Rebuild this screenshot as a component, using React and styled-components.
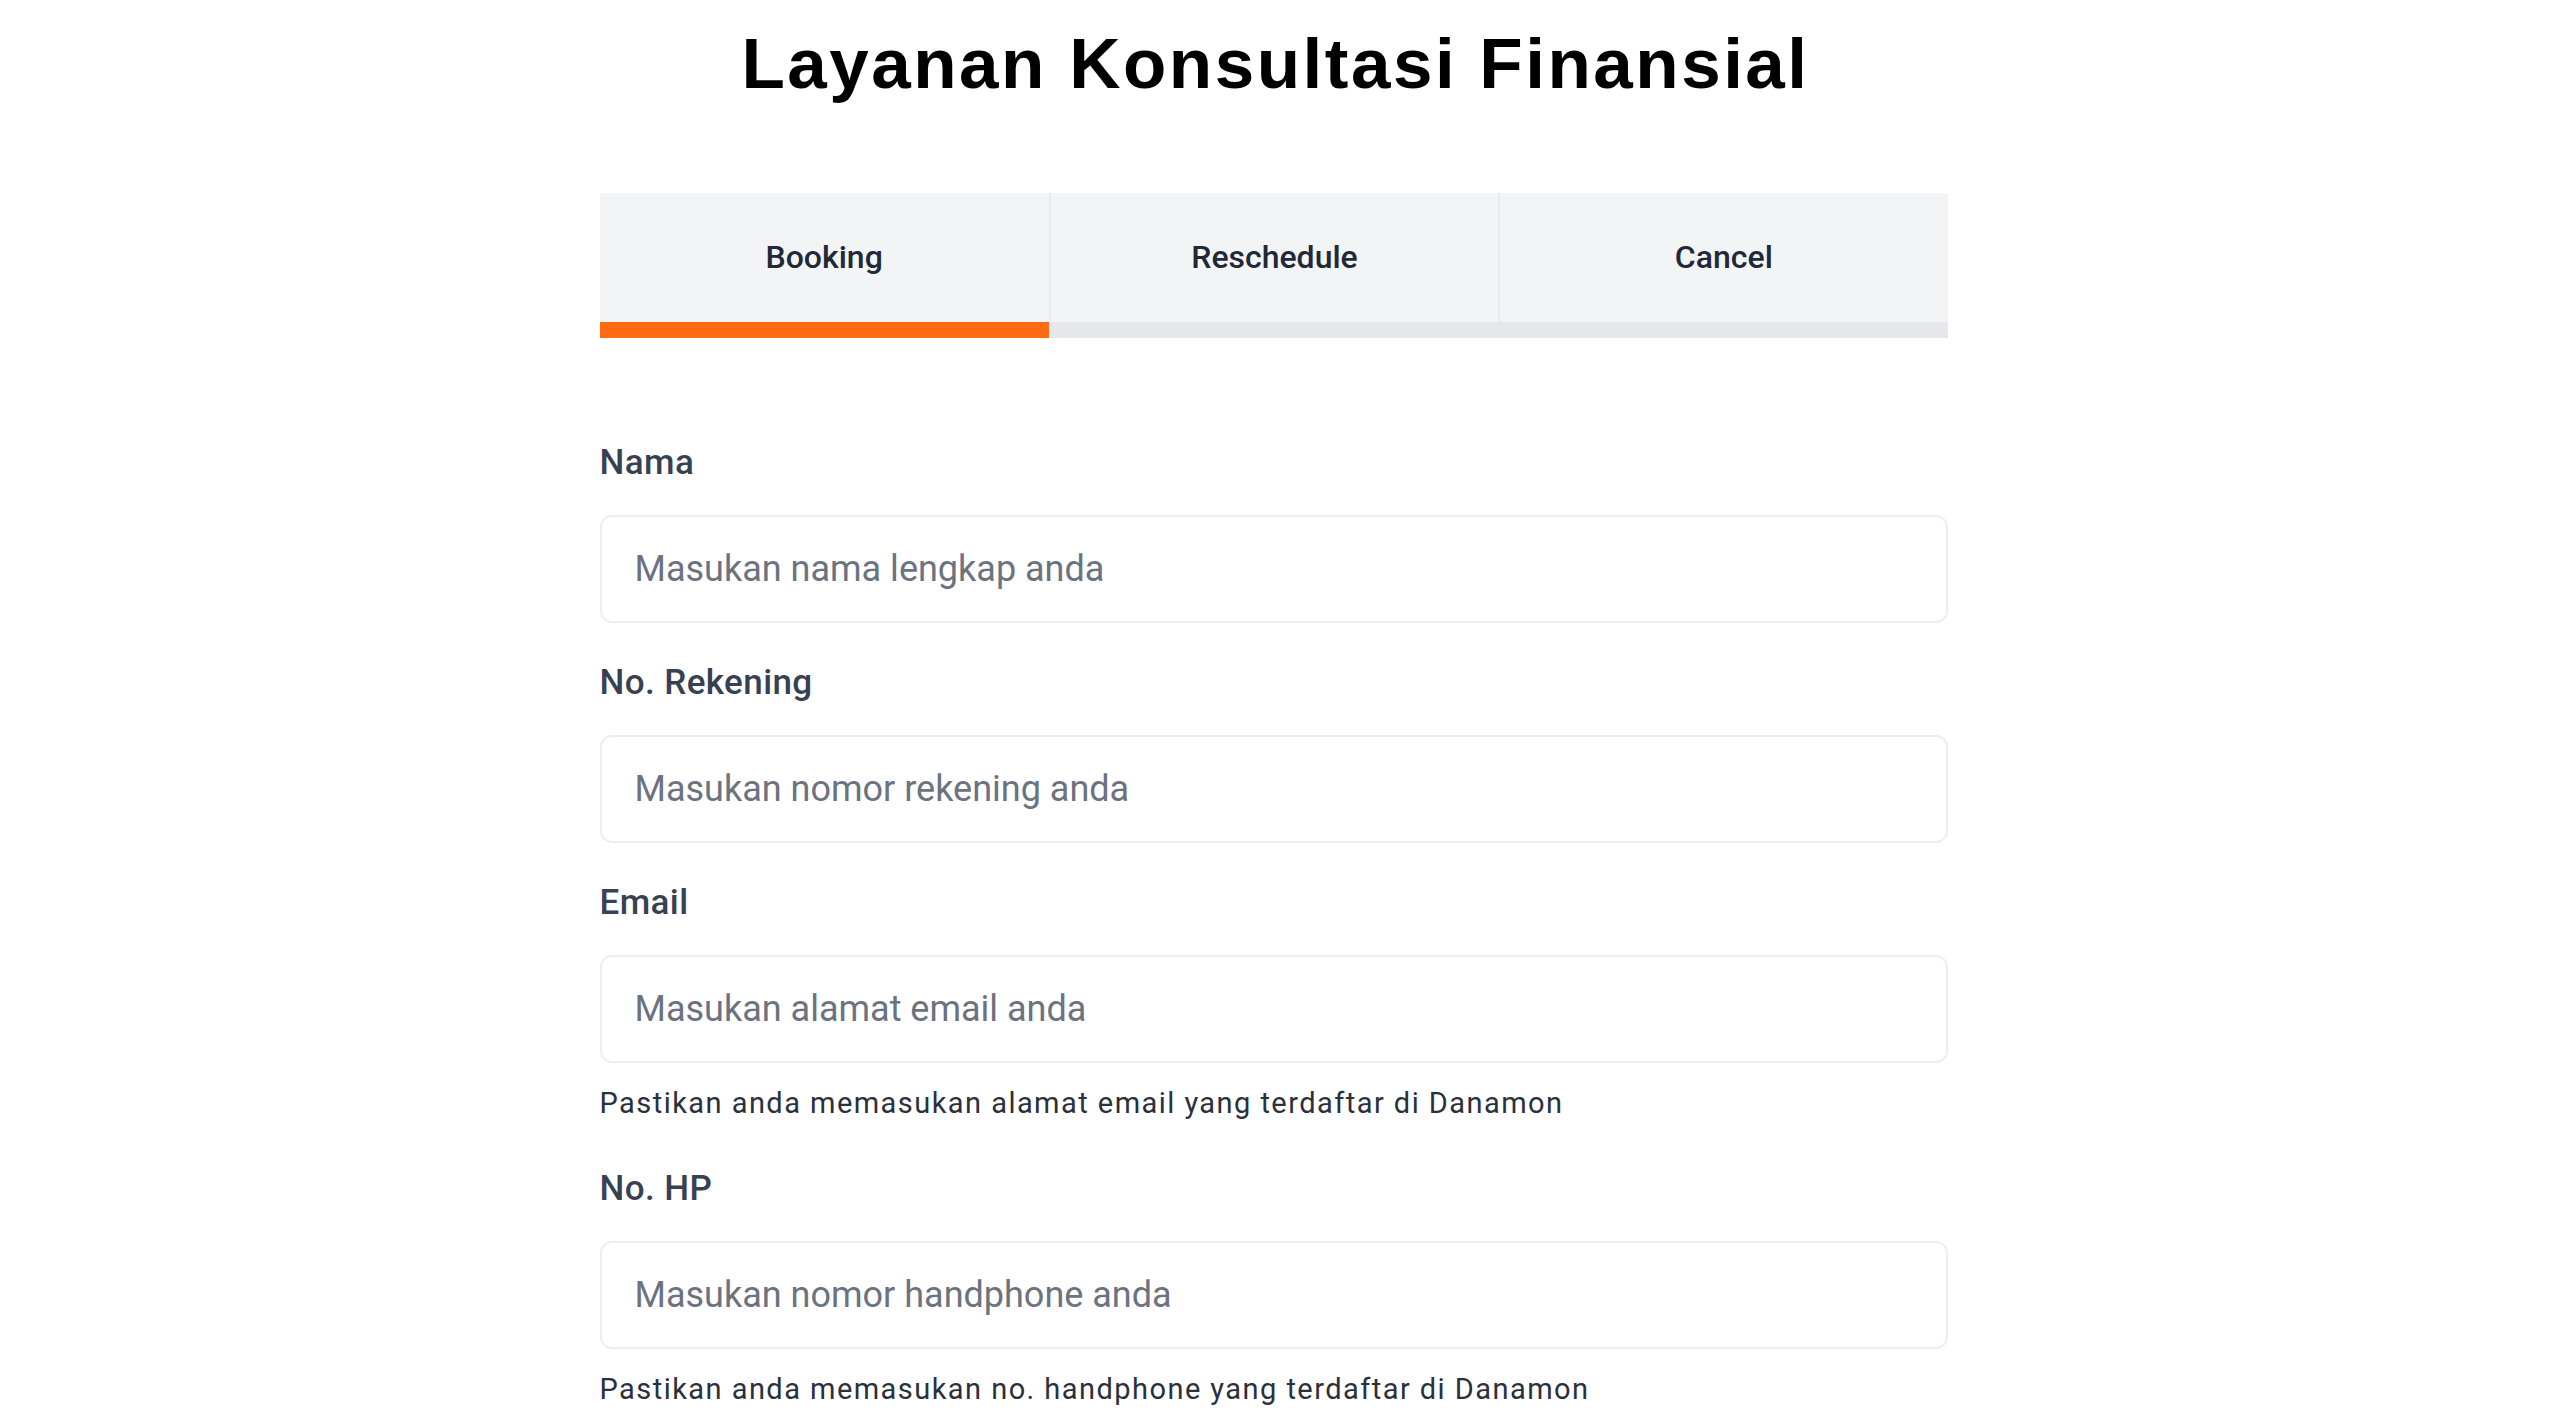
import React, { useState } from 'react'
import styled, { createGlobalStyle } from 'styled-components'

const GlobalStyle = createGlobalStyle`
    html, body {
        margin: 0;
        padding: 0;
        background: #fff;
    }
    body {
        font-family: Roboto, "Liberation Sans", sans-serif;
        color: #1f2937;
    }
`

const Page = styled.div`
    display: flex;
    flex-direction: column;
    align-items: center;
    padding-top: 23px;
`

const Title = styled.h1`
    margin: 0;
    font-family: "Liberation Sans", Arial, sans-serif;
    font-weight: 700;
    font-size: 71px;
    line-height: 82px;
    letter-spacing: 2.5px;
    color: #000;
`

const Content = styled.div`
    width: 1348px;
    margin-top: 88px;
    margin-right: 4px;
`

const TabBar = styled.div`
    display: grid;
    grid-template-columns: repeat(3, 1fr);
    background: #f3f4f6;
`

const Tab = styled.button`
    display: flex;
    align-items: center;
    justify-content: center;
    height: 145px;
    padding: 0 0 2px;
    border: none;
    border-left: ${({ first }) => (first ? 'none' : '2px solid #e6e8eb')};
    border-bottom: 16px solid ${({ active }) => (active ? '#ff6b12' : '#e5e7eb')};
    box-sizing: border-box;
    background: #f3f4f6;
    font-family: Roboto, sans-serif;
    font-weight: 500;
    font-size: 32px;
    color: #1f2937;
    cursor: pointer;
`

const Form = styled.form`
    display: flex;
    flex-direction: column;
    gap: 40px;
    margin-top: 105px;
`

const Field = styled.div`
    display: flex;
    flex-direction: column;
`

const Label = styled.label`
    font-family: Roboto, sans-serif;
    font-weight: 500;
    font-size: 35px;
    line-height: 40px;
    letter-spacing: 0.4px;
    color: #374151;
    margin-bottom: 32px;
`

const Input = styled.input`
    height: 108px;
    box-sizing: border-box;
    padding: 0 33px;
    border: 2px solid #eceef1;
    border-radius: 12px;
    background: #fff;
    font-family: Roboto, sans-serif;
    font-size: 36px;
    color: #1f2937;
    outline: none;

    &::placeholder {
        color: #6b7280;
    }
`

const Hint = styled.p`
    margin: 23px 0 9px;
    font-family: Roboto, sans-serif;
    font-weight: 400;
    font-size: 29px;
    line-height: 34px;
    letter-spacing: 1.45px;
    color: #2a303c;
`

const tabs = ['Booking', 'Reschedule', 'Cancel']

const fields = [
    { key: 'nama', label: 'Nama', placeholder: 'Masukan nama lengkap anda' },
    { key: 'rekening', label: 'No. Rekening', placeholder: 'Masukan nomor rekening anda' },
    {
        key: 'email',
        label: 'Email',
        placeholder: 'Masukan alamat email anda',
        hint: 'Pastikan anda memasukan alamat email yang terdaftar di Danamon',
    },
    {
        key: 'hp',
        label: 'No. HP',
        placeholder: 'Masukan nomor handphone anda',
        hint: 'Pastikan anda memasukan no. handphone yang terdaftar di Danamon',
    },
]

export default function App() {
    const [active, setActive] = useState(0)

    return <Page>
        <GlobalStyle />
        <Title>Layanan Konsultasi Finansial</Title>
        <Content>
            <TabBar>
                {tabs.map((t, i) => (
                    <Tab key={t} first={i === 0} active={i === active} onClick={() => setActive(i)}>
                        {t}
                    </Tab>
                ))}
            </TabBar>
            <Form onSubmit={e => e.preventDefault()}>
                {fields.map(f => (
                    <Field key={f.key}>
                        <Label htmlFor={f.key}>{f.label}</Label>
                        <Input id={f.key} placeholder={f.placeholder} />
                        {f.hint && <Hint>{f.hint}</Hint>}
                    </Field>
                ))}
            </Form>
        </Content>
    </Page>
}
